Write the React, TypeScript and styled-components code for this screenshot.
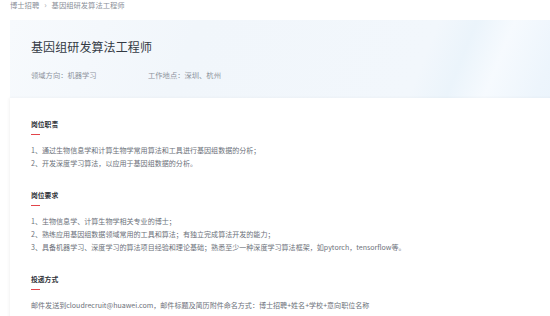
import React from 'react'
import styled, { createGlobalStyle } from 'styled-components'

const GlobalStyle = createGlobalStyle`
  html, body {
    margin: 0;
    padding: 0;
    background: #ffffff;
    font-family: "Noto Sans CJK SC", "Noto Sans", sans-serif;
    overflow: hidden;
  }
`

const StyledPage = styled.div`
  width: 600px;
  padding-left: 10px;
`

const StyledBreadcrumb = styled.div`
  display: flex;
  align-items: center;
  gap: 5px;
  height: 10px;
  line-height: 10px;
  font-size: 7.3px;
  color: #8a8f99;
`

const StyledCrumbSep = styled.span`
  font-size: 8px;
  color: #a0a4ac;
`

const StyledHeader = styled.div`
  margin-top: 10px;
  height: 78px;
  box-sizing: border-box;
  padding: 19px 0 0 21px;
  background: linear-gradient(
    112deg,
    #f7fafd 0%,
    #f1f6fb 30%,
    #f2f7fc 68%,
    #ebf4fb 74%,
    #f6fafe 80%,
    #edf5fc 88%,
    #e6f1fa 100%
  );
`

const StyledTitle = styled.h1`
  margin: 0;
  font-size: 12px;
  line-height: 16px;
  font-weight: 400;
  letter-spacing: 0.1px;
  color: #333a44;
`

const StyledMetaRow = styled.div`
  display: flex;
  margin-top: 15px;
  font-size: 7.3px;
  line-height: 10px;
  color: #8d939c;
`

const StyledMeta = styled.span<{ $width?: number }>`
  width: ${(p) => (p.$width ? `${p.$width}px` : 'auto')};
`

const StyledBody = styled.div`
  padding: 21px 21px 20px;
  background: #ffffff;
  box-shadow: -1px 0 3px rgba(0, 0, 0, 0.05);
`

const StyledSection = styled.section`
  margin-bottom: 20.5px;
`

const StyledHeading = styled.h2`
  margin: 0;
  font-size: 6.8px;
  line-height: 10px;
  font-weight: 700;
  color: #2f333a;
`

const StyledUnderline = styled.div`
  width: 9px;
  height: 1px;
  margin-top: 5px;
  background: #e2454a;
`

const StyledList = styled.div`
  margin-top: 8.5px;
`

const StyledItem = styled.p`
  margin: 0;
  font-size: 7.05px;
  line-height: 13px;
  color: #6c717a;
  white-space: nowrap;
`

const sections = [
  {
    title: '岗位职责',
    items: [
      '1、通过生物信息学和计算生物学常用算法和工具进行基因组数据的分析；',
      '2、开发深度学习算法，以应用于基因组数据的分析。',
    ],
  },
  {
    title: '岗位要求',
    items: [
      '1、生物信息学、计算生物学相关专业的博士；',
      '2、熟练应用基因组数据领域常用的工具和算法；有独立完成算法开发的能力；',
      '3、具备机器学习、深度学习的算法项目经验和理论基础；熟悉至少一种深度学习算法框架，如pytorch，tensorflow等。',
    ],
  },
  {
    title: '投递方式',
    items: [
      '邮件发送到cloudrecruit@huawei.com，邮件标题及简历附件命名方式：博士招聘+姓名+学校+意向职位名称',
    ],
  },
]

export default function App() {
  return (
    <>
      <GlobalStyle />
      <StyledPage>
        <StyledBreadcrumb>
          <span>博士招聘</span>
          <StyledCrumbSep>›</StyledCrumbSep>
          <span>基因组研发算法工程师</span>
        </StyledBreadcrumb>

        <StyledHeader>
          <StyledTitle>基因组研发算法工程师</StyledTitle>
          <StyledMetaRow>
            <StyledMeta $width={117}>领域方向：机器学习</StyledMeta>
            <StyledMeta>工作地点：深圳、杭州</StyledMeta>
          </StyledMetaRow>
        </StyledHeader>

        <StyledBody>
          {sections.map((s) => (
            <StyledSection key={s.title}>
              <StyledHeading>{s.title}</StyledHeading>
              <StyledUnderline />
              <StyledList>
                {s.items.map((t) => (
                  <StyledItem key={t}>{t}</StyledItem>
                ))}
              </StyledList>
            </StyledSection>
          ))}
        </StyledBody>
      </StyledPage>
    </>
  )
}
